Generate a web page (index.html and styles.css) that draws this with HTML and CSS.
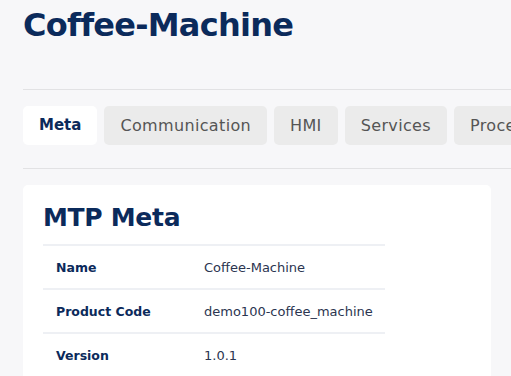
FILE: index.html
```html
<!DOCTYPE html>
<html lang="en">
<head>
    <meta charset="UTF-8">
    <title>Coffee-Machine</title>
    <link rel="stylesheet" href="styles.css">
</head>
<body>
    <!-- Header -->
    <h1 class="title">Coffee-Machine</h1>
    <hr class="divider">

    <!-- Tabs -->
    <div class="tabs">
        <a class="tab active">Meta</a>
        <a class="tab">Communication</a>
        <a class="tab">HMI</a>
        <a class="tab">Services</a>
        <a class="tab">Procedures</a>
    </div>
    <hr class="divider">

    <!-- Meta Card -->
    <div class="card">
        <h2>MTP Meta</h2>
        <table class="meta-table">
            <tr>
                <th>Name</th>
                <td>Coffee-Machine</td>
            </tr>
            <tr>
                <th>Product Code</th>
                <td>demo100-coffee_machine</td>
            </tr>
            <tr>
                <th>Version</th>
                <td>1.0.1</td>
            </tr>
        </table>
    </div>
</body>
</html>
```

FILE: styles.css
```css
body {
    font-family: 'DejaVu Sans', sans-serif;
    margin: 0;
    padding: 0 0 0 23px;
    background-color: #f7f7f9;
    color: #0b2a5b;
    overflow: hidden;
}

.title {
    font-size: 32px;
    font-weight: bold;
    margin: 0;
    padding-top: 6px;
    height: 83px;
    letter-spacing: -0.75px;
}

.divider {
    border: none;
    border-top: 1px solid #e2e2e4;
    margin: 0;
}

.tabs {
    display: flex;
    gap: 7px;
    padding: 16px 0 23px;
    white-space: nowrap;
}

.tab {
    flex-shrink: 0;
    background-color: #ebebeb;
    color: #555;
    font-size: 16px;
    letter-spacing: 0.35px;
    padding: 0 16px;
    height: 39px;
    line-height: 39px;
    border-radius: 5px;
    cursor: pointer;
}

.tab.active {
    background-color: #fff;
    color: #0b2a5b;
    font-size: 15px;
    letter-spacing: 0;
    font-weight: bold;
    padding: 0 16px;
}

.card {
    margin-top: 16px;
    width: 448px;
    background: #fff;
    border-radius: 5px;
    padding: 18px 0 0 20px;
    height: 200px;
}

.card h2 {
    font-size: 25px;
    font-weight: bold;
    margin: 0 0 12px;
    letter-spacing: -0.3px;
}

.meta-table {
    border-collapse: collapse;
    width: 342px;
    font-size: 13px;
}

.meta-table tr {
    border-top: 2px solid #eef0f4;
    height: 44px;
}

.meta-table th {
    text-align: left;
    padding-left: 13px;
    width: 146px;
    font-size: 12.5px;
    font-weight: bold;
}

.meta-table td {
    color: #2b3550;
}
```
